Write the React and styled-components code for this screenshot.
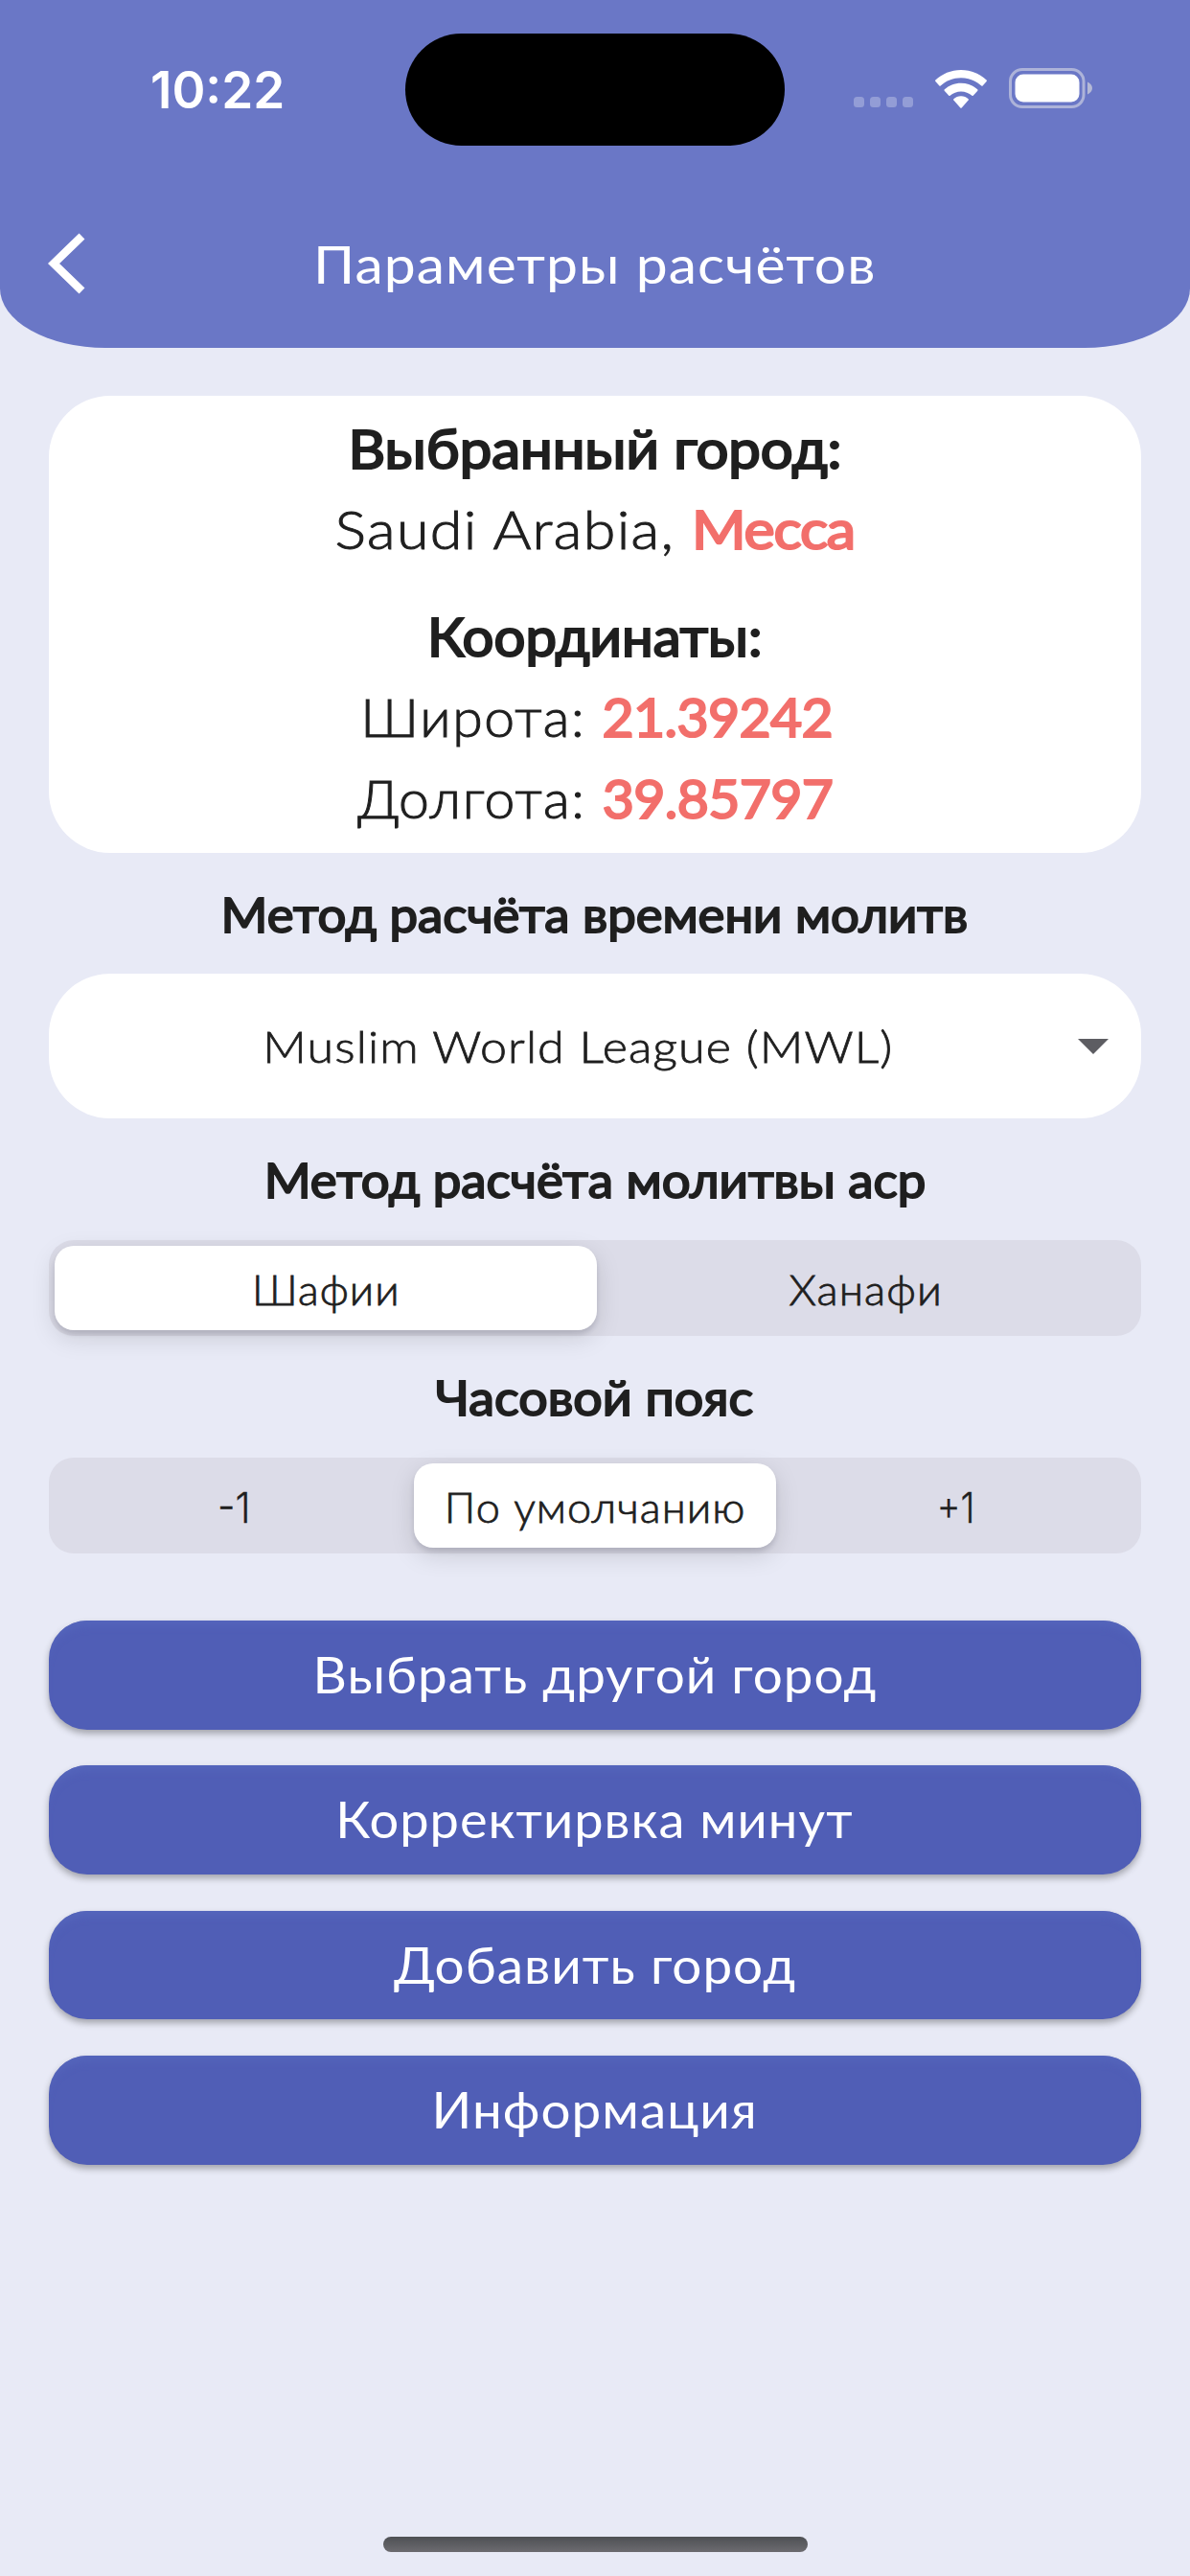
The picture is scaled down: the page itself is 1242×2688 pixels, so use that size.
import React from "react";
import styled, { createGlobalStyle, css } from "styled-components";

const Global = createGlobalStyle`
  * { box-sizing: border-box; }
  body { margin: 0; background: #e8eaf6; }
  button { border: 0; padding: 0; margin: 0; background: none; font: inherit; color: inherit; }
`;

const Screen = styled.div`
  width: 1242px;
  height: 2688px;
  display: flex;
  flex-direction: column;
  overflow: hidden;
  background: #e8eaf6;
  color: #1f1f1f;
  font-family: Lato, "Open Sans", sans-serif;
`;

/* Widens a run of text without changing its height. */
const Wide = styled.span`
  display: inline-block;
  white-space: pre;
  transform: scaleX(${(p) => p.$x});
`;

const Header = styled.header`
  height: 362.5px;
  flex: none;
  background: #6a77c6;
  color: #fff;
  border-radius: 0 0 110px 110px / 0 0 62px 62px;
`;

const StatusBar = styled.div`
  height: 187px;
  display: flex;
  align-items: center;
`;

const Clock = styled.div`
  width: 423px;
  padding-left: 157px;
  font: 600 53px/60px Inter, sans-serif;
`;

const Island = styled.div`
  width: 396px;
  height: 117px;
  border-radius: 59px;
  background: #000;
`;

const Indicators = styled.div`
  flex: 1;
  height: 42px;
  margin-top: -3px;
  padding-left: 72px;
  display: flex;
  align-items: flex-end;
`;

const SignalDots = styled.div`
  display: flex;
  gap: 6px;
  margin: 0 23px 1px 0;
`;

const Dot = styled.i`
  width: 11px;
  height: 11px;
  border-radius: 3.5px;
  background: #939dd6;
`;

const NavBar = styled.div`
  height: 175px;
  padding: 0 50px;
  display: grid;
  grid-template-columns: 1fr auto 1fr;
  align-items: center;
`;

const BackButton = styled.button`
  width: 40px;
  height: 64px;
  display: flex;
`;

const Title = styled.h1`
  margin: 0;
  font-size: 55px;
  line-height: 66px;
  font-weight: 400;
  letter-spacing: 1px;
`;

const Content = styled.main`
  padding: 50.5px 51px 0 50.5px;
  display: flex;
  flex-direction: column;
`;

const Card = styled.section`
  height: 476.5px;
  padding-top: 13px;
  border-radius: 64px;
  background: #fff;
  text-align: center;
  font-size: 56px;
  line-height: 84.4px;
`;

const CardLine = styled.div`
  margin-top: ${(p) => (p.$spaced ? 27 : 0)}px;
  padding-left: ${(p) => p.$indent || 0}px;
  height: 84.4px;
`;

const Plain = styled.span`
  font-weight: 300;
  -webkit-text-stroke: 1px currentColor;
  letter-spacing: ${(p) => p.$track}px;
`;

const Strong = styled.b`
  font-weight: 400;
  -webkit-text-stroke: 2.2px currentColor;
  letter-spacing: ${(p) => p.$track || 0}px;
  ${(p) => p.$accent && css`color: #f26f6b;`}
`;

const Label = styled.h2`
  height: 126.3px;
  margin: 0;
  font-size: 51px;
  line-height: 127px;
  font-weight: 400;
  -webkit-text-stroke: 2px currentColor;
  text-align: center;
`;

const Select = styled.button`
  height: 151.5px;
  padding: 0 34px 0 31px;
  border-radius: 64px;
  background: #fff;
  display: flex;
  align-items: center;
`;

const SelectText = styled.span`
  flex: 1;
  text-align: center;
  font-size: 46px;
  font-weight: 300;
  -webkit-text-stroke: 0.8px currentColor;
  letter-spacing: 1px;
`;

const Segments = styled.div`
  height: 100.8px;
  padding: 6.5px;
  border-radius: 26px;
  background: #dcdce8;
  display: grid;
  grid-template-columns: ${(p) => p.$columns};
`;

const Segment = styled.button`
  padding-top: 3px;
  border-radius: 20px;
  font-size: 43px;
  font-weight: 300;
  -webkit-text-stroke: 0.8px currentColor;
  letter-spacing: 1px;
  ${(p) => p.$numeric && css`
    font-family: Inter, sans-serif;
    letter-spacing: 0;
    -webkit-text-stroke: 0.3px currentColor;
  `}
  ${(p) => p.$active && css`
    background: #fff;
    box-shadow: 0 8px 26px rgba(0, 0, 0, 0.13), 0 4px 5px rgba(40, 45, 70, 0.14);
  `}
`;

const Actions = styled.div`
  margin-top: 69.5px;
  display: flex;
  flex-direction: column;
  gap: 37.8px;
`;

const Action = styled.button`
  height: 113.6px;
  padding-bottom: 3px;
  border-radius: 40px;
  background: #505eb6;
  box-shadow: 0 4px 7px rgba(0, 0, 0, 0.3), inset 0 10px 8px -5px #5566bc;
  color: #fff;
  font-size: 53px;
  font-weight: 400;
  letter-spacing: 1px;
`;

const HomeIndicator = styled.div`
  width: 443px;
  height: 16px;
  margin: auto auto 25px 400px;
  border-radius: 8px;
  background: linear-gradient(#4e5054, #6c6b70);
`;

const Wifi = () => (
  <svg width="54" height="40" viewBox="0 0 54 40">
    <path fill="#fff" d="M27 0C37.400 0 46.900 4.100 53.600 10.600q.7.700 0 1.400l-4 4.500q-.6.600-1.300 0C42.700 11.200 35.200 8.200 27 8.200S11.300 11.200 5.700 16.500q-.7.600-1.300 0L.4 12q-.7-.7 0-1.400C7.100 4.100 16.600 0 27 0Z" />
    <path fill="#fff" d="M27 13.700c6.700 0 12.700 2.500 17.200 6.600q.7.700.1 1.400l-4.600 5.100q-.6.600-1.300 0C35.300 24.100 31.400 22.400 27 22.400s-8.300 1.700-11.400 4.400q-.7.600-1.300 0L9.700 21.700q-.6-.7.100-1.400c4.500-4.100 10.500-6.600 17.200-6.600Z" />
    <path fill="#fff" d="M27 27.200c3 0 5.600 1.200 7.600 3q.7.700.1 1.400L27.700 39.400q-.7.700-1.400 0L19.300 31.600q-.6-.7.100-1.400c2-1.800 4.600-3 7.600-3Z" />
  </svg>
);

const BatteryWrap = styled.span`
  margin-left: 23px;
  display: flex;
`;

const Battery = () => (
  <BatteryWrap>
    <svg width="88" height="42" viewBox="0 0 88 42">
      <rect x="1.500" y="1.500" width="76.500" height="39" rx="12.500" fill="none" stroke="#adb3d9" strokeWidth="3" />
      <rect x="6.500" y="6.500" width="67" height="29" rx="8.500" fill="#fff" />
      <path d="M82 14.500c3 1.200 5 3.700 5 6.500s-2 5.300-5 6.500Z" fill="#b5b9d6" />
    </svg>
  </BatteryWrap>
);

const actions = [
  ["Выбрать другой город", 1.033],
  ["Корректирвка минут", 1.022],
  ["Добавить город", 1.034],
  ["Информация", 1.033],
];

export default function App() {
  return (
    <Screen>
      <Global />
      <Header>
        <StatusBar>
          <Clock>10:22</Clock>
          <Island />
          <Indicators>
            <SignalDots>
              <Dot /><Dot /><Dot /><Dot />
            </SignalDots>
            <Wifi />
            <Battery />
          </Indicators>
        </StatusBar>
        <NavBar>
          <BackButton aria-label="Назад">
            <svg width="40" height="64" viewBox="0 0 40 64">
              <path d="M35.500 3.500 6 32l29.500 28.500" fill="none" stroke="#fff" strokeWidth="8.500" />
            </svg>
          </BackButton>
          <Title><Wide $x={1.069}>Параметры расчётов</Wide></Title>
        </NavBar>
      </Header>
      <Content>
        <Card>
          <CardLine><Wide $x={1.068}><Strong>Выбранный город:</Strong></Wide></CardLine>
          <CardLine>
            <Wide $x={1.09}>
              <Plain $track={1.2}>Saudi Arabia, </Plain>
              <Strong $accent $track={-1.1}>Месса</Strong>
            </Wide>
          </CardLine>
          <CardLine $spaced><Wide $x={1.036}><Strong>Координаты:</Strong></Wide></CardLine>
          <CardLine $indent={4}>
            <Wide $x={1.02}>
              <Plain $track={1.6}>Широта: </Plain>
              <Strong $accent $track={-0.6}>21.39242</Strong>
            </Wide>
          </CardLine>
          <CardLine>
            <Wide $x={1.02}>
              <Plain $track={1.6}>Долгота: </Plain>
              <Strong $accent $track={-0.6}>39.85797</Strong>
            </Wide>
          </CardLine>
        </Card>
        <Label><Wide $x={1.033}>Метод расчёта времени молитв</Wide></Label>
        <Select>
          <SelectText><Wide $x={1.092}>Muslim World League (MWL)</Wide></SelectText>
          <svg width="32" height="16" viewBox="0 0 32 16">
            <path d="M0 0h32L16 16Z" fill="#5d5d62" />
          </svg>
        </Select>
        <Label><Wide $x={1.034}>Метод расчёта молитвы аср</Wide></Label>
        <Segments $columns="566px 1fr">
          <Segment $active><Wide $x={1.041}>Шафии</Wide></Segment>
          <Segment><Wide $x={1.06}>Ханафи</Wide></Segment>
        </Segments>
        <Label><Wide $x={1.054}>Часовой пояс</Wide></Label>
        <Segments $columns="1fr 378px 1fr">
          <Segment $numeric><Wide $x={0.95}>-1</Wide></Segment>
          <Segment $active><Wide $x={1.048}>По умолчанию</Wide></Segment>
          <Segment $numeric><Wide $x={0.88}>+1</Wide></Segment>
        </Segments>
        <Actions>
          {actions.map(([text, x]) => (
            <Action key={text}><Wide $x={x}>{text}</Wide></Action>
          ))}
        </Actions>
      </Content>
      <HomeIndicator />
    </Screen>
  );
}
